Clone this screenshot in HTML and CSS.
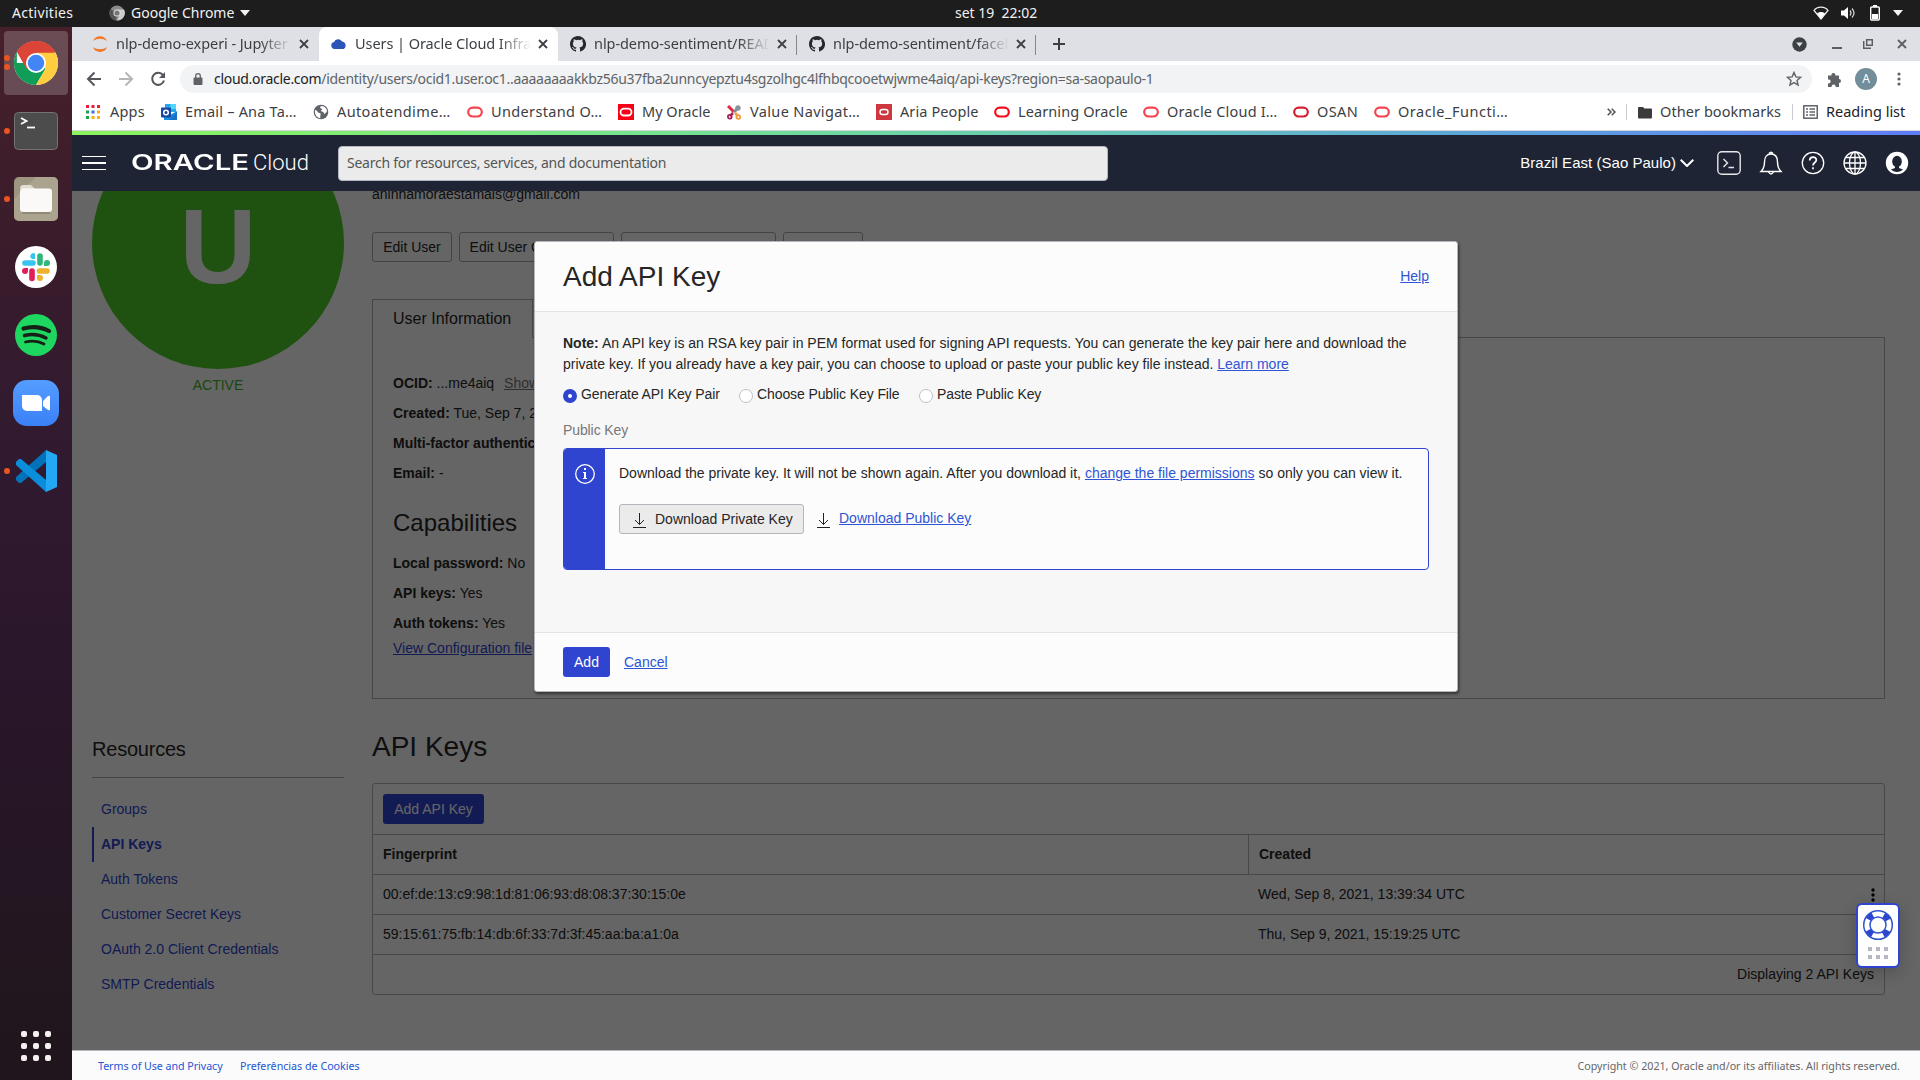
FILE: index.html
```html
<!DOCTYPE html>
<html lang="en">
<head>
<meta charset="utf-8">
<title>Users | Oracle Cloud Infrastructure</title>
<link rel="stylesheet" href="styles.css">
</head>
<body>
<svg width="0" height="0" class="defs">
  <symbol id="github" viewBox="0 0 16 16"><path fill="#24292e" d="M8 0C3.58 0 0 3.58 0 8c0 3.54 2.29 6.53 5.47 7.59.4.07.55-.17.55-.38v-1.49c-2.01.37-2.53-.49-2.69-.94-.09-.23-.48-.94-.82-1.13-.28-.15-.68-.52-.01-.53.63-.01 1.08.58 1.23.82.72 1.21 1.87.87 2.33.66.07-.52.28-.87.51-1.07-1.78-.2-3.64-.89-3.64-3.95 0-.87.31-1.59.82-2.15-.08-.2-.36-1.02.08-2.12 0 0 .67-.21 2.2.82a7.6 7.6 0 0 1 4 0c1.53-1.04 2.2-.82 2.2-.82.44 1.1.16 1.92.08 2.12.51.56.82 1.27.82 2.15 0 3.07-1.87 3.75-3.65 3.95.29.25.54.73.54 1.48v2.2c0 .21.15.46.55.38A8 8 0 0 0 8 0z"/></symbol>
  <symbol id="close" viewBox="0 0 10 10"><path d="M1 1l8 8M9 1l-8 8" stroke="#3c4043" stroke-width="1.8" fill="none"/></symbol>
  <symbol id="oval" viewBox="0 0 16 16"><rect x="1.2" y="3.7" width="13.6" height="8.8" rx="4.4" fill="none" stroke="currentColor" stroke-width="2.2"/></symbol>
  <symbol id="download" viewBox="0 0 14 15"><path d="M6.5 0v11.500M2 7l4.500 4.500L11 7M0 14.500h13" stroke="#222" stroke-width="1" fill="none"/></symbol>
</svg>

<div class="topbar">
  <span class="activities">Activities</span>
  <span class="appmenu">
    <svg width="16" height="16" viewBox="0 0 16 16"><circle cx="8" cy="8" r="7.500" fill="#8a8a8a"/><path d="M8 8L1.500 4A7.500 7.500 0 0 0 7 15.500z" fill="#555"/><path d="M8 4.500h7A7.500 7.500 0 0 1 8 15.500L11 9z" fill="#ccc"/><circle cx="8" cy="8" r="3.600" fill="#ddd"/><circle cx="8" cy="8" r="2.600" fill="#777"/></svg>
    <span class="appname">Google Chrome</span><i class="caret"></i>
  </span>
  <span class="clock">set 19&nbsp; 22:02</span>
  <span class="tray">
    <svg width="16" height="14" viewBox="0 0 16 14"><path d="M1 4.500C4 0 12 0 15 4.500L8 13z" fill="none" stroke="#eee" stroke-width="1.300"/><path d="M4 7.500c2-2 6-2 8 0L8 13z" fill="#fff"/></svg>
    <svg width="16" height="14" viewBox="0 0 16 14"><path d="M0 4.500h3L7 1v12L3 9.500H0z" fill="#fff"/><path d="M9 4.500q2 2.500 0 5M11 2.500q4 4.500 0 9" stroke="#ccc" stroke-width="1.300" fill="none"/></svg>
    <svg width="12" height="16" viewBox="0 0 12 16"><path d="M4 0h4v2H4z" fill="#fff"/><rect x="1.700" y="2" width="8.600" height="13" rx="1" fill="none" stroke="#fff" stroke-width="1.400"/><path d="M3 9h6v5H3z" fill="#fff"/></svg>
    <i class="caret"></i>
  </span>
</div>

<div class="desktop">
<nav class="dock">
  <div class="slot current two"><svg width="46" height="46" viewBox="0 0 48 48"><circle cx="24" cy="24" r="23" fill="#fff"/><path d="M24 24L4.100 12.500A23 23 0 0 1 43.900 12.500z" fill="#db4437"/><path d="M24 24H4L4.100 12.500A23 23 0 0 0 24 47L34 30z" fill="#0f9d58"/><path d="M24 13h20.200A23 23 0 0 1 24 47L34 30z" fill="#ffcd40"/><path d="M4.100 12.500A23 23 0 0 1 44.200 13H24L14 30z" fill="#db4437"/><circle cx="24" cy="24" r="10.500" fill="#fff"/><circle cx="24" cy="24" r="8.600" fill="#4285f4"/></svg></div>
  <div class="slot one"><svg width="44" height="38" viewBox="0 0 44 38"><rect x=".5" y=".5" width="43" height="37" rx="4" fill="#4c4c4c" stroke="#747474"/><path d="M7 6l5.500 3L7 12" stroke="#fff" stroke-width="1.800" fill="none"/><path d="M13 15.500h8" stroke="#fff" stroke-width="1.800"/></svg></div>
  <div class="slot one"><svg width="44" height="44" viewBox="0 0 44 44"><rect width="44" height="44" rx="5" fill="#9c957f"/><path d="M0 22L22 0h17a5 5 0 0 1 5 5v34a5 5 0 0 1-5 5H5a5 5 0 0 1-5-5z" fill="#aaa38d" /><path d="M6 12q0-4 3-4h8l4 4z" fill="#e1ddd3"/><rect x="6" y="11.500" width="32" height="23.500" rx="3" fill="#faf9f7"/><path d="M8 36h28" stroke="#77705f"/></svg></div>
  <div class="slot"><svg width="42" height="42" viewBox="0 0 42 42"><circle cx="21" cy="21" r="21" fill="#fff"/><g stroke-width="5.600" stroke-linecap="round"><path d="M10 17h8" stroke="#36c5f0"/><path d="M25 10v7" stroke="#2eb67d"/><path d="M24.500 25H32" stroke="#ecb22e"/><path d="M17 25v7.500" stroke="#e01e5a"/></g><path d="M20 7.500v5.500h-3a2.800 2.800 0 1 1 3-5.500z" fill="#36c5f0"/><path d="M29 20v-3a3 3 0 1 1 3 3z" fill="#2eb67d"/><path d="M22 29h3a3 3 0 1 1-3 3z" fill="#ecb22e"/><path d="M13 22v3a3 3 0 1 1-3-3z" fill="#e01e5a"/></svg></div>
  <div class="slot"><svg width="42" height="42" viewBox="0 0 42 42"><circle cx="21" cy="21" r="21" fill="#1ed760"/><g fill="none" stroke="#171f19" stroke-linecap="round"><path d="M8.500 14.500c9-2.500 18-1.500 25.500 2.500" stroke-width="4.200"/><path d="M9.500 21.500c8-2 15-1 21.500 2.500" stroke-width="3.500"/><path d="M10.500 28c7-1.500 13-1 18.500 2" stroke-width="2.800"/></g></svg></div>
  <div class="slot"><svg width="46" height="46" viewBox="0 0 46 46"><defs><linearGradient id="zm" x1="0" y1="0" x2="0" y2="1"><stop stop-color="#559dff"/><stop offset="1" stop-color="#3a80f8"/></linearGradient></defs><rect width="46" height="46" rx="14" fill="url(#zm)"/><path d="M9 15h15a5 5 0 0 1 5 5v11H14a5 5 0 0 1-5-5zM30 21l5-5q2-1 2 1v12q0 2-2 1l-5-4z" fill="#fff"/></svg></div>
  <div class="slot one"><svg width="42" height="42" viewBox="0 0 42 42"><path d="M31 0L1 27v3l3 3h2L31 12z" fill="#0072b9"/><path d="M31 42L1 15v-3l3-3h2L31 30z" fill="#0a8ddb"/><path d="M31 0l11 5v32l-11 5z" fill="#25a8f3"/></svg></div>
  <div class="apps-grid"><i></i><i></i><i></i><i></i><i></i><i></i><i></i><i></i><i></i></div>
</nav>

<div class="window">
  <div class="tabstrip">
    <div class="tab"><svg width="16" height="18" viewBox="0 0 16 18"><path d="M1 6C3-.5 13-.5 15 6 11 3 5 3 1 6zM1 12c4 3 10 3 14 0-2 6.500-12 6.500-14 0z" fill="#f37726"/></svg><span class="title">nlp-demo-experi - Jupyter N</span><svg class="x" width="10" height="10"><use href="#close"/></svg></div>
    <div class="tab active"><svg width="16" height="16" viewBox="0 0 16 16"><path d="M3.500 13a3.500 3.500 0 0 1-.5-6.900A4.500 4.500 0 0 1 11 5.500 4 4 0 0 1 12.500 13z" fill="#2c55b8"/></svg><span class="title">Users | Oracle Cloud Infrastr</span><svg class="x" width="10" height="10"><use href="#close"/></svg></div>
    <div class="tab sep"><svg width="16" height="16"><use href="#github"/></svg><span class="title">nlp-demo-sentiment/READ</span><svg class="x" width="10" height="10"><use href="#close"/></svg></div>
    <div class="tab sep"><svg width="16" height="16"><use href="#github"/></svg><span class="title">nlp-demo-sentiment/faceb</span><svg class="x" width="10" height="10"><use href="#close"/></svg></div>
    <svg class="plus" width="12" height="12" viewBox="0 0 12 12"><path d="M6 0v12M0 6h12" stroke="#3c4043" stroke-width="2"/></svg>
    <div class="controls">
      <svg width="15" height="15" viewBox="0 0 15 15"><circle cx="7.500" cy="7.500" r="7.200" fill="#3c4043"/><path d="M4.200 5.500h6.600l-3.300 4.300z" fill="#dee1e6"/></svg>
      <svg width="10" height="12" viewBox="0 0 10 12"><path d="M0 10h10" stroke="#5a5d61" stroke-width="2"/></svg>
      <svg width="10" height="10" viewBox="0 0 10 10"><path d="M3.700.7h5.600v5.600H3.700zM.7 2v7.300H8" stroke="#5a5d61" stroke-width="1.500" fill="none"/></svg>
      <svg width="10" height="10" viewBox="0 0 10 10"><path d="M1 1l8 8M9 1l-8 8" stroke="#5a5d61" stroke-width="1.800"/></svg>
    </div>
  </div>

  <div class="toolbar">
    <svg class="nav" width="16" height="16" viewBox="0 0 16 16"><path d="M15 8H2M8.500 1.500L2 8l6.500 6.500" stroke="#54575b" stroke-width="2" fill="none"/></svg>
    <svg class="nav" width="16" height="16" viewBox="0 0 16 16"><path d="M1 8h13M7.500 1.500L14 8l-6.500 6.500" stroke="#b4b6b9" stroke-width="2" fill="none"/></svg>
    <svg class="nav" width="16" height="16" viewBox="0 0 16 16"><path d="M13 4.200A6 6 0 1 0 14 9.500" stroke="#54575b" stroke-width="2" fill="none"/><path d="M15 1v6H9z" fill="#54575b"/></svg>
    <div class="omnibox">
      <svg width="10" height="12" viewBox="0 0 10 12"><rect x=".5" y="4.500" width="9" height="7.500" rx="1" fill="#5f6368"/><path d="M2.700 5V3a2.300 2.300 0 0 1 4.600 0v2" stroke="#5f6368" stroke-width="1.300" fill="none"/></svg>
      <span class="url"><b>cloud.oracle.com</b>/identity/users/ocid1.user.oc1..aaaaaaaakkbz56u37fba2unncyepztu4sgzolhgc4lfhbqcooetwjwme4aiq/api-keys?region=sa-saopaulo-1</span>
      <svg class="star" width="16" height="16" viewBox="0 0 16 16"><path d="M8 1.500l1.900 4.400 4.700.4-3.600 3.100 1.100 4.700L8 11.600l-4.100 2.500L5 9.400 1.400 6.300l4.700-.4z" stroke="#5f6368" stroke-width="1.400" fill="none"/></svg>
    </div>
    <div class="tools">
      <svg width="15" height="15" viewBox="0 0 15 15"><path d="M1 3.500h3.500a2 2 0 1 1 3.800 0H12V7a2 2 0 1 1 0 4v4H8.500a2 2 0 1 0-3.800 0H1v-3.700a2 2 0 1 0 0-3.800z" fill="#5f6368"/></svg>
      <span class="avatar">A</span>
      <svg width="4" height="14" viewBox="0 0 4 14"><g fill="#5f6368"><circle cx="2" cy="2" r="1.600"/><circle cx="2" cy="7" r="1.600"/><circle cx="2" cy="12" r="1.600"/></g></svg>
    </div>
  </div>

  <div class="bookmarks">
    <a class="bm b-apps"><svg width="14" height="14" viewBox="0 0 14 14"><path d="M0 0h3v3H0zM5.500 0h3v3h-3zM11 0h3v3h-3z" fill="#ea1d3c"/><path d="M0 5.500h3v3H0z" fill="#1ca352"/><path d="M5.500 5.500h3v3h-3z" fill="#3c6cf0"/><path d="M11 5.500h3v3h-3zM5.500 11h3v3h-3zM11 11h3v3h-3z" fill="#fbb009"/><path d="M0 11h3v3H0z" fill="#1ca352"/></svg><span>Apps</span></a>
    <a class="bm b-mail"><svg width="16" height="16" viewBox="0 0 16 16"><path d="M4 0h11v8H4z" fill="#28a8ea"/><path d="M9.500 0H15v5H9.500z" fill="#50d9ff"/><path d="M3 7l6 4 7-4v9H3z" fill="#1490df"/><path d="M8 16l8-8v8z" fill="#1a6fc4"/><rect y="3.500" width="10" height="10" rx="1" fill="#1747a5"/><circle cx="5" cy="8.500" r="2.300" fill="none" stroke="#fff" stroke-width="1.500"/></svg><span>Email – Ana Ta…</span></a>
    <a class="bm b-auto"><svg width="16" height="16" viewBox="0 0 16 16"><circle cx="8" cy="8" r="7.300" fill="#5f6368"/><path d="M2 6c3 0 2 3 4.500 3s0 3 1 5.300C4 14 1.500 11 2 6zM8 2c-2 2 0 2 1 3s-3 2 0 2.500 1 3 3 2 2-3 2-3C13.500 4 11 2 8 2z" fill="#fff"/></svg><span>Autoatendime…</span></a>
    <a class="bm b-und light"><svg width="16" height="16"><use href="#oval"/></svg><span>Understand O…</span></a>
    <a class="bm b-my"><svg width="16" height="16" viewBox="0 0 16 16"><path d="M0 0h16v16H0z" fill="#f80017"/><rect x="2.500" y="4.700" width="11" height="6.800" rx="3.400" fill="none" stroke="#fff" stroke-width="1.800"/></svg><span>My Oracle</span></a>
    <a class="bm b-val"><svg width="14" height="15" viewBox="0 0 14 15"><g fill="none" stroke-width="1.800"><path d="M1 1l6 6" stroke="#e7283c" stroke-width="3"/><path d="M7 7l5-5" stroke="#7d8c96" stroke-width="3"/><circle cx="11" cy="3" r="1.800" stroke="#8a979e"/><path d="M6 8l-3 3" stroke="#a8205a" stroke-width="2.500"/><circle cx="2.800" cy="11.800" r="1.900" stroke="#a8205a"/><path d="M8 8l3 3" stroke="#f19b38" stroke-width="2.500"/><circle cx="11.300" cy="12" r="1.900" stroke="#f19b38"/></g></svg><span>Value Navigat…</span></a>
    <a class="bm b-aria"><svg width="16" height="16" viewBox="0 0 16 16"><path d="M0 0h16v16H0z" fill="#ce373d"/><rect x="4" y="5.500" width="8" height="5" rx="2.500" fill="none" stroke="#fff" stroke-width="1.400"/></svg><span>Aria People</span></a>
    <a class="bm b-learn"><svg width="16" height="16"><use href="#oval"/></svg><span>Learning Oracle</span></a>
    <a class="bm b-oci light"><svg width="16" height="16"><use href="#oval"/></svg><span>Oracle Cloud I…</span></a>
    <a class="bm b-osan dark"><svg width="16" height="16"><use href="#oval"/></svg><span>OSAN</span></a>
    <a class="bm b-fn light"><svg width="16" height="16"><use href="#oval"/></svg><span>Oracle_Functi…</span></a>
    <div class="bm-right">
      <svg class="more" width="9" height="8" viewBox="0 0 9 8"><path d="M.7.700L4 4 .700 7.300M4.700.700L8 4 4.700 7.300" stroke="#4c4f53" stroke-width="1.500" fill="none"/></svg>
      <i class="rule"></i>
      <a class="bm other"><svg width="14" height="13" viewBox="0 0 14 13"><path d="M0 1.500Q0 1 1 1h4l1.500 1.500H13q1 0 1 1v8q0 1-1 1H1q-1 0-1-1z" fill="#3b3b3b"/></svg><span>Other bookmarks</span></a>
      <i class="rule"></i>
      <a class="bm reading"><svg width="15" height="14" viewBox="0 0 15 14"><rect x=".8" y=".8" width="13.400" height="12.400" fill="none" stroke="#5f6368" stroke-width="1.500"/><path d="M3 4h2M3 7h2M3 10h2M6.500 4H12M6.500 7H12M6.500 10H12" stroke="#5f6368" stroke-width="1.400"/></svg><span>Reading list</span></a>
    </div>
  </div>
  <div class="spectrum"></div>

  <header class="console-head">
    <div class="burger"><i></i><i></i><i></i></div>
    <div class="brand"><span class="oracle"><span>ORACLE</span></span><span class="cloud">Cloud</span></div>
    <div class="search"><span>Search for resources, services, and documentation</span></div>
    <div class="head-right">
      <span class="region">Brazil East (Sao Paulo)</span>
      <svg class="chev" width="14" height="8" viewBox="0 0 14 8"><path d="M.7.700L7 7 13.300.700" stroke="#fff" stroke-width="2" fill="none"/></svg>
      <svg width="24" height="24" viewBox="0 0 24 24" fill="none" stroke="#e8e8ea" stroke-width="1.400"><rect x=".8" y=".8" width="22.400" height="22.400" rx="4"/><path d="M6.500 8l4 4-4 4M11.500 16.500h5.500"/></svg>
      <svg width="24" height="24" viewBox="0 0 24 24" fill="none" stroke="#fff" stroke-width="1.400"><path d="M2 20.500h20c-3-3-3.500-5-3.500-9.500 0-5-2.500-8-6.500-8s-6.500 3-6.500 8c0 4.500-.5 6.500-3.500 9.500zM10 2.500q2-2.500 4 0M9.500 21q2.500 4 5 0"/></svg>
      <svg width="24" height="24" viewBox="0 0 24 24" fill="none" stroke="#fff" stroke-width="1.300"><circle cx="12" cy="12" r="10.700"/><path d="M8.700 9.500c0-4.500 6.600-4.300 6.600-.6 0 2.800-3.300 2.500-3.300 5.600M12 16.200v2" stroke-width="1.700"/></svg>
      <svg width="24" height="24" viewBox="0 0 24 24" fill="none" stroke="#fff" stroke-width="1.300"><circle cx="12" cy="12" r="11"/><ellipse cx="12" cy="12" rx="5.500" ry="11"/><path d="M12 1v22M1 12h22M3 6.500h18M3 17.500h18"/></svg>
      <svg width="24" height="24" viewBox="0 0 24 24"><circle cx="12" cy="12" r="11.200" fill="#fff"/><ellipse cx="12" cy="10.500" rx="4.800" ry="5.800" fill="#1e2433"/><path d="M10 14h4v3l4 1.500c-3 3.300-9 3.300-12 0L10 17z" fill="#1e2433"/></svg>
    </div>
  </header>

  <main class="page">
    <aside class="side">
      <div class="badge">U</div>
      <div class="status">ACTIVE</div>
      <h3>Resources</h3>
      <ul>
        <li>Groups</li><li class="on">API Keys</li><li>Auth Tokens</li><li>Customer Secret Keys</li><li>OAuth 2.0 Client Credentials</li><li>SMTP Credentials</li>
      </ul>
    </aside>
    <section class="detail">
      <div class="mail">aninhamoraestamais@gmail.com</div>
      <div class="actions"><span class="btn w80">Edit User</span><span class="btn w155">Edit User Capabilities</span><span class="btn w155"></span><span class="btn w80"></span></div>
      <div class="tabhead">User Information</div>
      <div class="panel">
        <p><b>OCID:</b> ...me4aiq <u class="show">Show</u></p>
        <p><b>Created:</b> Tue, Sep 7, 2021</p>
        <p><b>Multi-factor authentication:</b></p>
        <p><b>Email:</b> -</p>
        <h2>Capabilities</h2>
        <p><b>Local password:</b> No</p>
        <p><b>API keys:</b> Yes</p>
        <p><b>Auth tokens:</b> Yes</p>
        <a class="view">View Configuration file</a>
      </div>
      <h1>API Keys</h1>
      <div class="table">
        <div class="tools-row"><span class="primary">Add API Key</span></div>
        <div class="row head"><span>Fingerprint</span><span>Created</span></div>
        <div class="row"><span>00:ef:de:13:c9:98:1d:81:06:93:d8:08:37:30:15:0e</span><span>Wed, Sep 8, 2021, 13:39:34 UTC</span><svg class="kebab" width="4" height="14" viewBox="0 0 4 14"><circle cx="2" cy="2" r="1.700"/><circle cx="2" cy="7" r="1.700"/><circle cx="2" cy="12" r="1.700"/></svg></div>
        <div class="row"><span>59:15:61:75:fb:14:db:6f:33:7d:3f:45:aa:ba:a1:0a</span><span>Thu, Sep 9, 2021, 15:19:25 UTC</span></div>
        <div class="row sum">Displaying 2 API Keys</div>
      </div>
    </section>
    <div class="shade"></div>
    <div class="helper">
      <svg width="32" height="32" viewBox="0 0 32 32"><circle cx="16" cy="16" r="11.200" fill="none" stroke="#2f45cf" stroke-width="6.500" stroke-dasharray="6.200 11.390" stroke-dashoffset="-5.700"/><circle cx="16" cy="16" r="14.300" fill="none" stroke="#2f55cf" stroke-width="1.500"/><circle cx="16" cy="16" r="8" fill="#fff" stroke="#2f55cf" stroke-width="1.500"/></svg>
      <div class="grip"><i></i><i></i><i></i><i></i><i></i><i></i></div>
    </div>
    <div class="modal">
      <div class="m-head"><span class="m-title">Add API Key</span><a>Help</a></div>
      <div class="m-body">
        <div class="note"><b>Note:</b> An API key is an RSA key pair in PEM format used for signing API requests. You can generate the key pair here and download the<br>private key. If you already have a key pair, you can choose to upload or paste your public key file instead. <a>Learn more</a></div>
        <div class="radios"><label><i class="radio on"></i>Generate API Key Pair</label><label><i class="radio"></i>Choose Public Key File</label><label><i class="radio"></i>Paste Public Key</label></div>
        <div class="pk">Public Key</div>
        <div class="info">
          <div class="info-side"><svg width="20" height="20" viewBox="0 0 20 20"><circle cx="10" cy="10" r="9.300" fill="none" stroke="#fff" stroke-width="1.300"/><path d="M9 4h2v2H9zM8 8h3v6h1v1H8v-1h1V9H8z" fill="#fff"/></svg></div>
          <div class="info-main">
            <div>Download the private key. It will not be shown again. After you download it, <a>change the file permissions</a> so only you can view it.</div>
            <div class="dl"><span class="dl-btn"><svg width="14" height="15"><use href="#download"/></svg>Download Private Key</span><svg class="dl-icon" width="14" height="15"><use href="#download"/></svg><a>Download Public Key</a></div>
          </div>
        </div>
      </div>
      <div class="m-foot"><span class="add">Add</span><a>Cancel</a></div>
    </div>
  </main>

  <footer class="foot"><span class="f1">Terms of Use and Privacy</span><span class="f2">Preferências de Cookies</span><span class="copy">Copyright © 2021, Oracle and/or its affiliates. All rights reserved.</span></footer>
</div>
</div>
</body>
</html>
```
FILE: styles.css
```css
* { box-sizing: border-box; }
body { margin: 0; width: 1920px; height: 1080px; overflow: hidden; font: 14px/20px "Liberation Sans", Arial, sans-serif; color: #262626; }
.defs { position: absolute; }
svg { flex: none; display: block; }
h1, h2, h3, p, ul { margin: 0; padding: 0; font-weight: 400; list-style: none; }
.topbar, .tabstrip, .toolbar, .bookmarks, .search, .foot { font-family: "Noto Sans", sans-serif; white-space: nowrap; }

/* desktop top bar */
.topbar { display: flex; align-items: center; height: 27px; background: #1d1d1d; color: #f2f2f2; font-size: 14px; padding: 0 0 1px 12px; }
.activities { width: 97px; letter-spacing: .3px; }
.appmenu { display: flex; align-items: center; width: 846px; }
.appname { margin-left: 6px; width: 105px; }
.caret { width: 0; height: 0; border: 5px solid transparent; border-top: 6px solid #f2f2f2; border-bottom: 0; margin-left: 4px; }
.clock { width: 858px; }
.tray { display: flex; align-items: center; gap: 12px; }
.tray .caret { margin-left: 0; }

.desktop { display: flex; height: 1053px; }
.dock { width: 72px; flex: none; padding: 4px; display: flex; flex-direction: column; gap: 4px; background: linear-gradient(180deg, #46202a 0, #3a1c2b 20%, #311a30 40%, #291629 65%, #22161f 90%, #20151c 100%); }
.slot { position: relative; height: 64px; display: flex; align-items: center; justify-content: center; border-radius: 4px; }
.current { background: rgba(255,255,255,.2); }
.one::before, .two::before, .two::after { content: ""; position: absolute; left: 0; top: 29px; width: 6px; height: 6px; border-radius: 3px; background: #e95420; }
.two::before { top: 24px; }
.two::after { top: 33px; }
.apps-grid { margin: auto 17px 15px; display: grid; grid-template-columns: repeat(3, 6px); gap: 6px; }
.apps-grid i { width: 6px; height: 6px; border-radius: 2px; background: #f4f1f0; }

.window { width: 1848px; display: flex; flex-direction: column; }

/* tabs */
.tabstrip { height: 34px; background: #dee0e5; display: flex; align-items: center; padding-left: 8px; color: #3c4043; }
.tab { position: relative; width: 239px; height: 34px; padding: 0 10px 0 12px; display: flex; align-items: center; }
.active { background: #fff; border-radius: 8px 8px 0 0; }
.sep::after { content: ""; position: absolute; right: 0; top: 8px; width: 1px; height: 20px; background: #85878b; }
.sep:nth-child(3)::after { right: 0; }
.title { margin: -2px 0 0 8px; width: 176px; overflow: hidden; font-size: 14.500px; letter-spacing: -.07px; -webkit-mask-image: linear-gradient(90deg, #000 82%, transparent); mask-image: linear-gradient(90deg, #000 82%, transparent); }
.x { margin-left: auto; }
.plus { margin-left: 17px; }
.controls { margin-left: auto; margin-right: 13px; display: flex; align-items: center; gap: 24px; }
.controls svg:first-child { margin-right: 1px; }
.controls svg:nth-child(2) { margin-right: -3px; }

/* toolbar */
.toolbar { height: 37px; background: #fff; display: flex; align-items: center; padding: 0 0 1px 14px; }
.nav { margin-right: 16px; }
.omnibox { margin-left: -2px; width: 1632px; height: 28px; border-radius: 14px; background: #f1f3f4; display: flex; align-items: center; padding: 0 10px 0 13px; }
.url { margin-left: 11px; font-size: 14px; color: #5f6368; letter-spacing: -.29px; }
.url b { font-weight: 400; color: #202124; }
.star { margin-left: auto; }
.tools { display: flex; align-items: center; margin-left: 15px; }
.avatar { width: 22px; height: 22px; border-radius: 11px; background: #728e9b; color: #fff; font-size: 12px; line-height: 22px; text-align: center; margin: 0 20px 0 13px; }

/* bookmarks */
.bookmarks { height: 32px; background: #fff; display: flex; align-items: center; padding: 0 0 4px 14px; color: #3c4043; font-size: 14.500px; }
.bm { display: flex; align-items: center; gap: 8px; flex: none; color: #f80a1e; }
.bm span { color: #3c4043; margin-top: -2px; }
.light { color: #f5424f; }
.dark { color: #d3202f; }
.b-apps { width: 75px; gap: 10px; letter-spacing: .2px; }
.b-mail { width: 152px; letter-spacing: .2px; }
.b-auto { width: 154px; letter-spacing: .38px; }
.b-und { width: 151px; letter-spacing: .35px; }
.b-my { width: 109px; }
.b-val { width: 149px; gap: 9px; letter-spacing: .35px; }
.b-aria { width: 118px; letter-spacing: .1px; }
.b-learn { width: 149px; letter-spacing: .1px; }
.b-oci { width: 150px; letter-spacing: .2px; }
.b-osan { width: 81px; letter-spacing: .4px; }
.b-fn { width: 233px; letter-spacing: .5px; }
.bm-right { display: flex; align-items: center; }
.rule { width: 1px; height: 16px; background: #c9cbce; margin-left: 10px; }
.other { margin-left: 11px; width: 144px; letter-spacing: .07px; }
.reading { margin-left: 10px; }
.reading span { color: #202124; }
.spectrum { height: 5px; border-top: 1px solid #d5d5da; background: linear-gradient(90deg, #8cf45c, #74e48e 31%, #62bfc0 61%, #5b9ee0 80%, #5f7cf8); }

/* console header */
.console-head { height: 56px; background: #1e2433; display: flex; align-items: center; color: #fff; padding-left: 10px; }
.burger { width: 24px; display: flex; flex-direction: column; gap: 5px; }
.burger i { height: 1.500px; background: #fff; }
.brand { width: 207px; margin-left: 25px; display: flex; align-items: baseline; }
.oracle { width: 122px; font: 600 21px/24px Inter, sans-serif; }
.oracle span { display: inline-block; transform: scaleX(1.4); transform-origin: 0 50%; }
.cloud { font: 300 22px/24px Roboto, sans-serif; }
.search { width: 770px; height: 35px; margin-top: 1px; background: #ebebeb; border: 1px solid #b4b7bf; border-radius: 4px; padding-left: 8px; line-height: 32px; color: #555; font-size: 14px; letter-spacing: -.25px; }
.head-right { margin-left: auto; margin-right: 11px; display: flex; align-items: center; gap: 18px; }
.region { font-size: 15px; margin-right: -14px; letter-spacing: .03px; }
.chev { margin-right: 5px; }

/* page */
.page { position: relative; height: 859px; flex: none; overflow: hidden; background: #fcfcfc; display: flex; padding-left: 20px; }
.side { width: 252px; }
.badge { width: 252px; height: 252px; margin-top: -74px; border-radius: 50%; background: #4ecd28; color: #fcfcfc; font-weight: 700; font-size: 106px; line-height: 258px; text-align: center; }
.status { margin-top: 6px; text-align: center; color: #44b423; }
.side h3 { margin-top: 342px; font-size: 20px; line-height: 24px; letter-spacing: -.22px; padding-bottom: 16px; border-bottom: 1px solid #aaa; }
.side ul { margin-top: 14px; }
.side li { height: 35px; line-height: 35px; padding-left: 9px; color: #2f45cf; }
.side .on { font-weight: 700; padding-left: 7px; border-left: 2px solid #2f45cf; }
.detail { margin-left: 28px; width: 1513px; }
.mail { margin-top: -7px; }
.actions { display: flex; gap: 7px; margin-top: 28px; }
.btn { height: 30px; line-height: 28px; border: 1px solid #a9a9ae; border-radius: 3px; text-align: center; white-space: nowrap; }
.w80 { width: 80px; }
.w155 { width: 155px; }
.tabhead { position: relative; width: 161px; height: 39px; margin-top: 37px; margin-bottom: -1px; border: 1px solid #b0b0b0; border-bottom: 0; background: #fcfcfc; padding: 9px 0 0 20px; font-size: 16px; }
.panel { height: 362px; border: 1px solid #b0b0b0; padding: 30px 20px 0; }
.panel p { line-height: 30px; }
.show { color: #777; margin-left: 6px; }
.panel h2 { margin: 20px 0 10px; font-size: 24px; line-height: 30px; }
.view { display: block; color: #2f45cf; text-decoration: underline; }
.detail h1 { margin: 31px 0 20px; font-size: 28px; line-height: 33px; }
.table { border: 1px solid #b4b4b8; border-radius: 3px; }
.tools-row { height: 50px; padding: 10px; display: flex; }
.primary { width: 101px; height: 30px; line-height: 30px; border-radius: 3px; background: #2f45cf; color: #fcfcfc; text-align: center; }
.row { height: 40px; border-top: 1px solid #b4b4b8; line-height: 39px; display: flex; align-items: center; }
.row > span:first-child { width: 875px; padding-left: 10px; }
.row > span:nth-child(2) { padding-left: 10px; }
.head { font-weight: 700; }
.head > span:nth-child(2) { border-left: 1px solid #b4b4b8; }
.kebab { margin-left: auto; margin-right: 9px; }
.sum { justify-content: flex-end; padding-right: 10px; }
.shade { position: absolute; inset: 0; background: rgba(0,0,0,.6); }

.helper { position: absolute; left: 1784px; top: 712px; width: 44px; height: 65px; border: 2px solid #2f45cf; border-radius: 6px; background: #fff; box-shadow: 0 4px 16px rgba(0,0,0,.2); display: flex; flex-direction: column; align-items: center; padding-top: 4px; }
.grip { margin-top: 6px; display: grid; grid-template-columns: repeat(3, 4px); gap: 4px; }
.grip i { width: 4px; height: 4px; background: #b5b8c4; }

/* dialog */
.modal { position: absolute; left: 462px; top: 50px; width: 924px; height: 451px; background: #fcfcfc; border: 1px solid #b4b5bd; border-radius: 3px; box-shadow: 1px 2px 3px rgba(0,0,0,.5); }
.modal a { color: #2f55d4; text-decoration: underline; }
.m-head { height: 70px; border-bottom: 1px solid #e4e4e4; padding: 0 28px; display: flex; justify-content: space-between; align-items: center; }
.m-head a { margin-top: -2px; }
.m-title { font-size: 28px; line-height: 32px; }
.m-body { height: 320px; background: #f7f7f7; padding: 21px 28px 0; }
.note { line-height: 21px; white-space: nowrap; }
.radios { display: flex; margin-top: 9px; line-height: 20px; }
.radios label { display: flex; letter-spacing: -.1px; }
.radios label:nth-child(1) { width: 176px; }
.radios label:nth-child(2) { width: 180px; }
.radio { width: 14px; height: 14px; border-radius: 7px; border: 1px solid #bfc1c9; background: #fff; margin: 5px 4px 0 0; }
.radio.on { border: 5px solid #2f45cf; }
.pk { margin-top: 16px; color: #777; letter-spacing: -.1px; }
.info { margin-top: 8px; height: 122px; border: 1px solid #2f45cf; border-radius: 4px; background: #fcfcfc; display: flex; overflow: hidden; }
.info-side { width: 41px; background: #2f45cf; padding: 15px 0 0 11px; }
.info-main { padding: 14px 0 0 14px; }
.dl { display: flex; margin-top: 21px; }
.dl-btn { width: 185px; height: 30px; border: 1px solid #b4b5bd; border-radius: 3px; background: #ebebeb; display: flex; line-height: 28px; padding-left: 13px; }
.dl-btn svg { margin: 8px 8px 0 0; }
.dl-icon { margin: 9px 8px 0 13px; }
.dl a { line-height: 28px; }
.m-foot { height: 59px; border-top: 1px solid #e4e4e4; display: flex; padding: 14px 28px; line-height: 30px; }
.add { width: 47px; height: 30px; border-radius: 3px; background: #2f45cf; color: #fff; text-align: center; margin-right: 14px; }

.foot { height: 30px; flex: none; border-top: 1px solid #b4b7bf; background: #fbfbfb; display: flex; align-items: center; padding: 0 20px 0 26px; font-size: 10.700px; color: #2555d4; }
.f1 { width: 142px; letter-spacing: -.05px; }
.copy { margin-left: auto; color: #666; }
```
